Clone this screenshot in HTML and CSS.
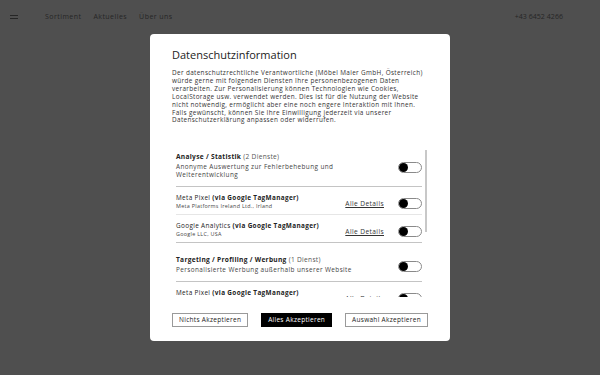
FILE: index.html
```html
<!DOCTYPE html>
<html lang="de">
<head>
<meta charset="utf-8">
<title>Datenschutzinformation</title>
<link rel="stylesheet" href="styles.css">
</head>
<body>
<header class="nav">
  <span class="burger"><i></i><i></i></span>
  <nav class="links"><a>Sortiment</a><a>Aktuelles</a><a>Über uns</a></nav>
  <span class="phone">+43 6452 4266</span>
</header>

<div class="overlay">
  <div class="modal">
    <h2 class="title">Datenschutzinformation</h2>
    <p class="intro">Der datenschutzrechtliche Verantwortliche (Möbel Maier GmbH, Österreich)<br>würde gerne mit folgenden Diensten Ihre personenbezogenen Daten<br>verarbeiten. Zur Personalisierung können Technologien wie Cookies,<br>LocalStorage usw. verwendet werden. Dies ist für die Nutzung der Website<br>nicht notwendig, ermöglicht aber eine noch engere Interaktion mit Ihnen.<br>Falls gewünscht, können Sie Ihre Einwilligung jederzeit via unserer<br>Datenschutzerklärung anpassen oder widerrufen.</p>

    <div class="list-wrap">
      <div class="list">
        <div class="row cat">
          <div class="info">
            <div class="cat-title"><b>Analyse / Statistik</b> <span class="count">(2 Dienste)</span></div>
            <div class="desc">Anonyme Auswertung zur Fehlerbehebung und<br>Weiterentwicklung</div>
          </div>
          <span class="toggle"></span>
        </div>
        <div class="row svc">
          <div class="info">
            <div class="svc-title">Meta Pixel <b>(via Google TagManager)</b></div>
            <div class="svc-sub">Meta Platforms Ireland Ltd., Irland</div>
          </div>
          <a class="details">Alle Details</a>
          <span class="toggle"></span>
        </div>
        <div class="row svc end">
          <div class="info">
            <div class="svc-title">Google Analytics <b>(via Google TagManager)</b></div>
            <div class="svc-sub">Google LLC, USA</div>
          </div>
          <a class="details">Alle Details</a>
          <span class="toggle"></span>
        </div>

        <div class="row cat">
          <div class="info">
            <div class="cat-title"><b>Targeting / Profiling / Werbung</b> <span class="count">(1 Dienst)</span></div>
            <div class="desc">Personalisierte Werbung außerhalb unserer Website</div>
          </div>
          <span class="toggle"></span>
        </div>
        <div class="row svc end">
          <div class="info">
            <div class="svc-title">Meta Pixel <b>(via Google TagManager)</b></div>
            <div class="svc-sub">Meta Platforms Ireland Ltd., Irland</div>
          </div>
          <a class="details">Alle Details</a>
          <span class="toggle"></span>
        </div>
      </div>
      <div class="scrollbar"><span class="thumb"></span></div>
    </div>

    <div class="actions">
      <button class="btn">Nichts Akzeptieren</button>
      <button class="btn primary">Alles Akzeptieren</button>
      <button class="btn">Auswahl Akzeptieren</button>
    </div>
  </div>
</div>
</body>
</html>
```

FILE: styles.css
```css
html, body {
  margin: 0;
  padding: 0;
}
body {
  width: 600px;
  height: 375px;
  overflow: hidden;
  background: #4f4f4f;
  font-family: "Open Sans", "Liberation Sans", sans-serif;
  color: #222;
}

/* background page nav */
.nav {
  display: flex;
  align-items: center;
  height: 33px;
  padding: 0 37px 0 10px;
  color: #262626;
  font-size: 7px;
}
.burger {
  display: flex;
  flex-direction: column;
  gap: 2px;
  width: 8px;
}
.burger i {
  display: block;
  height: 1px;
  background: #262626;
}
.links {
  display: flex;
  gap: 12px;
  margin-left: 27px;
  letter-spacing: 0.45px;
}
.phone {
  margin-left: auto;
  letter-spacing: 0.05px;
}

/* modal */
.overlay {
  position: fixed;
  inset: 0;
  display: flex;
  align-items: center;
  justify-content: center;
}
.modal {
  width: 300px;
  height: 307px;
  box-sizing: border-box;
  background: #fff;
  border-radius: 4px;
  padding: 13px 22px 14px;
  display: flex;
  flex-direction: column;
}
.title {
  margin: 0;
  font-size: 11px;
  line-height: 16px;
  font-weight: 500;
  color: #1c1c1c;
}
.intro {
  margin: 6px 0 0;
  font-size: 6.4px;
  line-height: 7.9px;
  letter-spacing: 0.35px;
  color: #333;
  white-space: nowrap;
}

.list-wrap {
  margin-top: 16px;
  height: 157px;
  display: flex;
  flex: none;
}
.list {
  flex: 1;
  min-width: 0;
  overflow: hidden;
  padding-left: 4px;
  margin-right: 3px;
}
.scrollbar {
  width: 2px;
  margin-right: 1px;
  padding-top: 10px;
  display: flex;
  flex-direction: column;
}
.thumb {
  display: block;
  height: 82px;
  background: #c8c8c8;
}

.row {
  display: flex;
  align-items: center;
  border-bottom: 1px solid #c4c4c4;
}
.info {
  flex: 1;
  min-width: 0;
  white-space: nowrap;
}
.cat {
  padding: 12px 0 7px;
}
.cat-title {
  font-size: 6.6px;
  line-height: 9px;
  letter-spacing: 0.3px;
  color: #222;
}
.cat-title b {
  font-weight: 700;
}
.count {
  color: #555;
}
.desc {
  margin-top: 2px;
  font-size: 6.4px;
  line-height: 8px;
  letter-spacing: 0.4px;
  color: #444;
}
.svc {
  padding: 6px 0 4px;
  border-bottom-color: #e6e6e6;
}
.svc.end {
  border-bottom-color: #c4c4c4;
}
.svc-title {
  font-size: 6.4px;
  line-height: 9px;
  letter-spacing: 0.35px;
  color: #222;
}
.svc-title b {
  font-weight: 700;
}
.svc-sub {
  font-size: 5.4px;
  line-height: 8px;
  letter-spacing: 0.3px;
  color: #444;
}
.details {
  margin: 3px 14px 0 0;
  font-size: 6.6px;
  letter-spacing: 0.4px;
  color: #333;
  text-decoration: underline;
}
.toggle {
  flex: none;
  display: flex;
  align-items: center;
  width: 22px;
  height: 9px;
  border: 1px solid #8a8a8a;
  border-radius: 6px;
  margin-top: 4px;
}
.toggle::before {
  content: "";
  width: 9px;
  height: 9px;
  border-radius: 50%;
  background: #000;
}

.actions {
  margin-top: auto;
  display: flex;
  justify-content: space-between;
}
.btn {
  font-family: "Open Sans", "Liberation Sans", sans-serif;
  font-size: 6.5px;
  line-height: 12px;
  letter-spacing: 0.3px;
  height: 14px;
  padding: 0 6px;
  border: 1px solid #9a9a9a;
  background: #fff;
  color: #222;
  border-radius: 0;
}
.btn.primary {
  background: #000;
  border-color: #000;
  color: #fff;
}
```
